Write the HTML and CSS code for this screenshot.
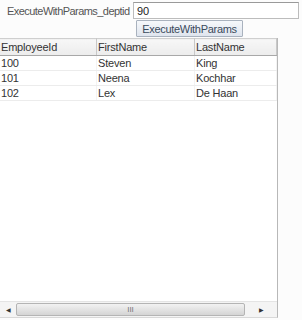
FILE: index.html
```html
<!DOCTYPE html>
<html lang="en">
  <head>
    <meta charset="UTF-8" />
    <title>ExecuteWithParams</title>
    <link rel="stylesheet" href="styles.css">
  </head>
  <body>
    <div class="form-row">
      <label class="param-label" for="deptid">ExecuteWithParams_deptid</label>
      <input class="param-input" type="text" id="deptid" value="90" />
    </div>
    <div class="button-row">
      <button class="exec-btn">ExecuteWithParams</button>
    </div>

    <div class="table-box">
      <div class="table-body">
        <table class="grid">
          <thead>
            <tr>
              <th class="col-id">EmployeeId</th>
              <th class="col-first">FirstName</th>
              <th class="col-last">LastName</th>
            </tr>
          </thead>
          <tbody>
            <tr><td>100</td><td>Steven</td><td>King</td></tr>
            <tr><td>101</td><td>Neena</td><td>Kochhar</td></tr>
            <tr><td>102</td><td>Lex</td><td>De Haan</td></tr>
          </tbody>
        </table>
      </div>
      <div class="hscroll">
        <div class="arrow arrow-left">&#9664;</div>
        <div class="thumb"><span class="grip">III</span></div>
        <div class="arrow arrow-right">&#9654;</div>
      </div>
    </div>
  </body>
</html>
```

FILE: styles.css
```css
body {
  margin: 0;
  background: #fcfcfc;
  font-family: "Liberation Sans", Arial, sans-serif;
  font-size: 11px;
  color: #333;
}
.form-row {
  display: flex;
  align-items: center;
  height: 19px;
  padding-top: 1px;
}
.param-label {
  flex: 0 0 126px;
  padding-left: 7px;
  white-space: nowrap;
  letter-spacing: -0.55px;
  color: #555;
}
.param-input {
  flex: 0 0 auto;
  width: 158px;
  height: 15px;
  margin: 0;
  padding: 0 3px;
  border: 1px solid #bcbcbc;
  border-top-color: #9a9a9a;
  background: #fff;
  font-family: inherit;
  font-size: 11px;
  color: #222;
  outline: none;
}
.button-row {
  padding-left: 136px;
  height: 18px;
}
.exec-btn {
  width: 107px;
  height: 17px;
  margin: 0;
  padding: 0;
  border: 1px solid #a9b2be;
  border-radius: 1px;
  background: linear-gradient(#f6f8fb, #dfe5ee);
  font-family: inherit;
  font-size: 11px;
  letter-spacing: -0.3px;
  color: #3a4a5c;
}
.table-box {
  width: 277px;
  height: 279px;
  border-right: 1px solid #b8b8b8;
  border-bottom: 1px solid #d8d8d8;
  background: #fff;
  display: flex;
  flex-direction: column;
}
.table-body {
  flex: 1;
}
.grid {
  width: 100%;
  border-collapse: collapse;
  table-layout: fixed;
  letter-spacing: -0.2px;
}
.grid th {
  height: 16px;
  padding: 0 0 0 1px;
  text-align: left;
  font-weight: normal;
  color: #333;
  background: linear-gradient(#f7f7f7, #ececec);
  border-top: 1px solid #cfcfcf;
  border-bottom: 1px solid #a8a8a8;
  border-right: 1px solid #c8c8c8;
}
.grid td {
  height: 14px;
  padding: 0 0 0 1px;
  border-bottom: 1px solid #ececec;
  border-right: 1px solid #f3f3f3;
  color: #333;
}
.col-id {
  width: 95px;
}
.col-first {
  width: 96px;
}
.hscroll {
  height: 15px;
  display: flex;
  align-items: stretch;
  background: #f4f4f4;
  border-top: 1px solid #e4e4e4;
}
.arrow {
  width: 16px;
  font-size: 6px;
  color: #333;
  display: flex;
  align-items: center;
  justify-content: center;
}
.arrow-right {
  width: 32px;
}
.thumb {
  flex: 1;
  margin: 1px 0;
  border: 1px solid #b4b4b4;
  border-radius: 2px;
  background: linear-gradient(#f2f2f2, #d4d4d4);
  display: flex;
  align-items: center;
  justify-content: center;
}
.grip {
  font-size: 8px;
  color: #777;
}
```
